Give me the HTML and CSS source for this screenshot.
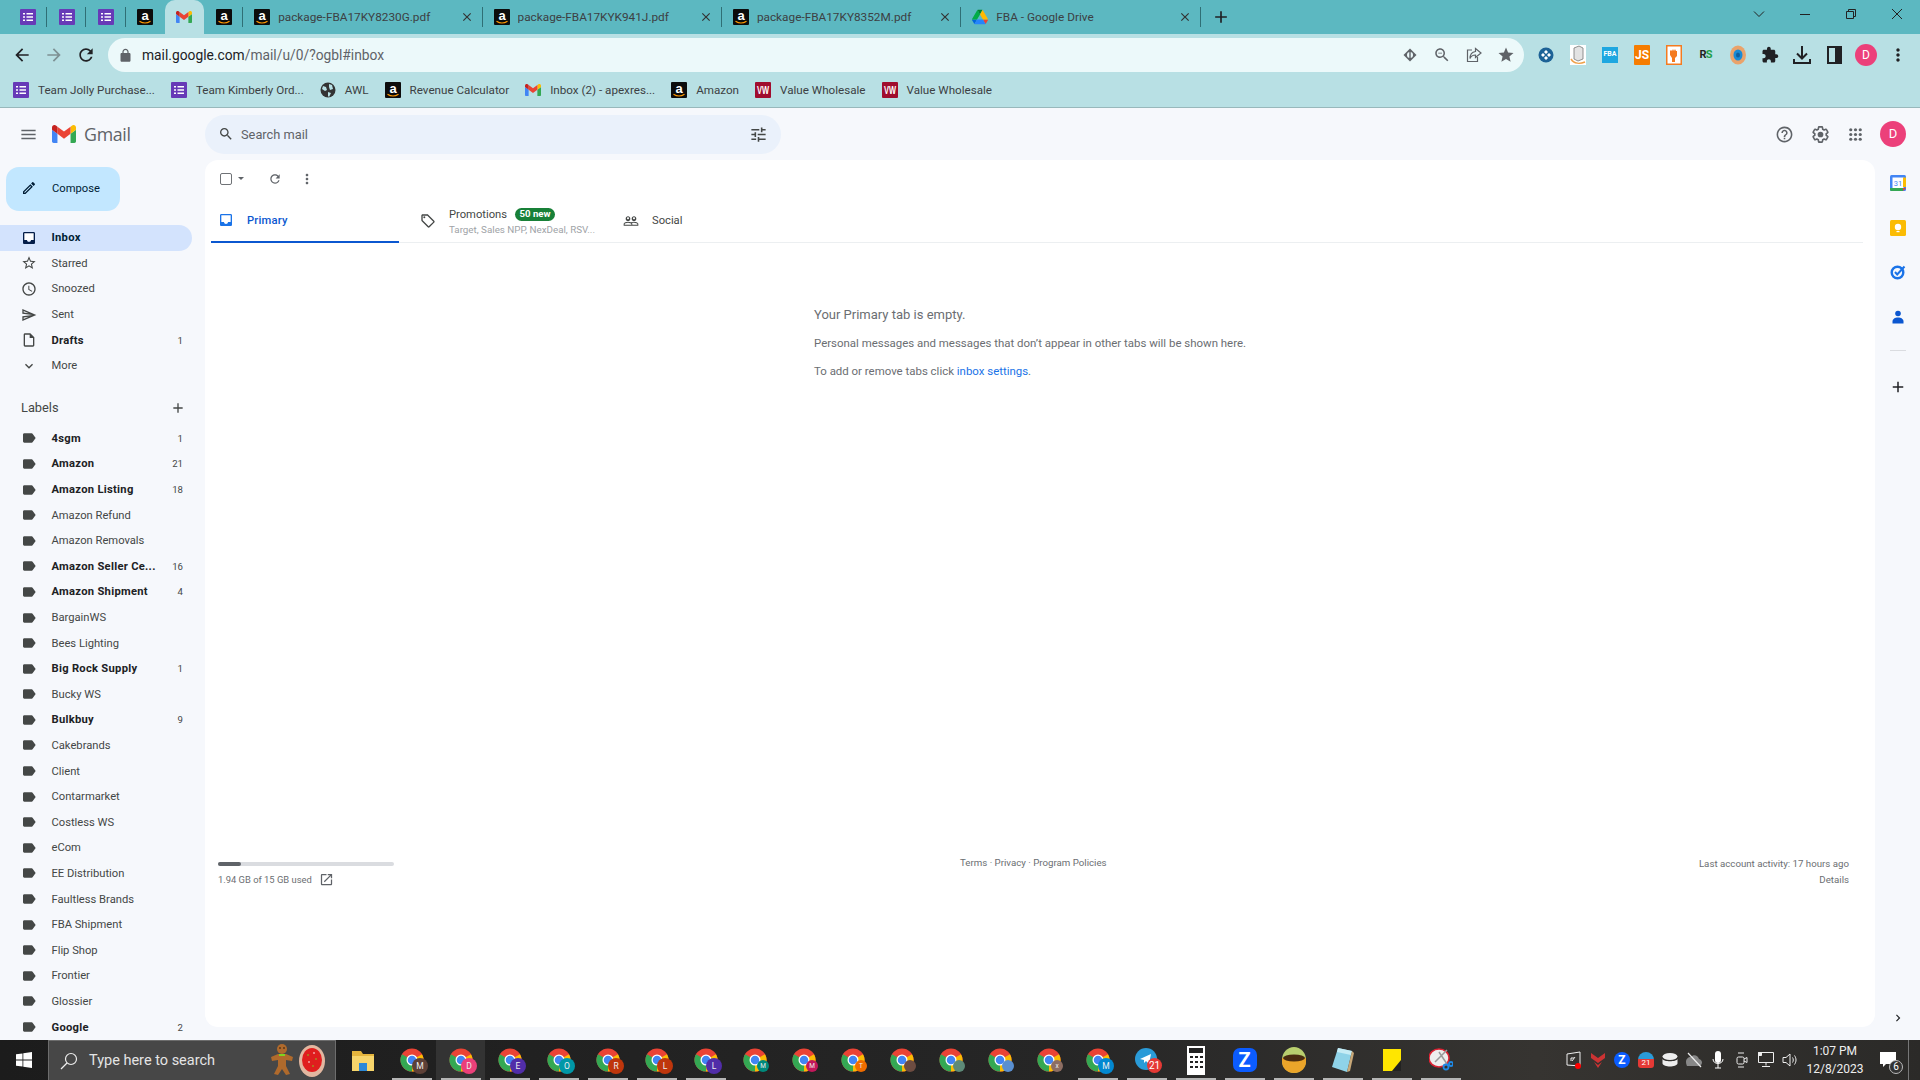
FILE: index.html
```html
<!DOCTYPE html>
<html lang="en">
<head>
    <meta charset="UTF-8">
    <title>Inbox - Gmail</title>
    <link rel="stylesheet" href="styles.css">
</head>
<body>

<svg class="defs" aria-hidden="true">
    <symbol id="forms" viewBox="0 0 16 16"><rect width="16" height="16" rx="1" fill="#673ab7"/><path d="M3 4h2v1.6H3zM6.5 4H13v1.6H6.5zM3 7.2h2v1.6H3zM6.5 7.2H13v1.6H6.5zM3 10.4h2V12H3zM6.5 10.4H13V12H6.5z" fill="#fff"/></symbol>
    <symbol id="amazon" viewBox="0 0 16 16"><rect width="16" height="16" rx="1" fill="#0c0c0c"/><text x="8" y="10.8" text-anchor="middle" font-family="Liberation Sans, sans-serif" font-weight="700" font-size="13" fill="#fff">a</text><path d="M2.5 12.2c3.5 2.3 7.5 2.3 11 0" fill="none" stroke="#f90" stroke-width="1.2"/></symbol>
    <symbol id="gmail" viewBox="52 42 88 66"><path fill="#4285f4" d="M58 108h14V74L52 59v43c0 3.32 2.69 6 6 6"/><path fill="#34a853" d="M120 108h14c3.32 0 6-2.69 6-6V59l-20 15"/><path fill="#fbbc04" d="M120 48v26l20-15v-8c0-7.42-8.47-11.65-14.4-7.2"/><path fill="#ea4335" d="M72 74V48l24 18 24-18v26L96 92"/><path fill="#c5221f" d="M52 51v8l20 15V48l-5.6-4.2c-5.94-4.45-14.4-.22-14.4 7.2"/></symbol>
    <symbol id="drive" viewBox="0 0 87.3 78"><path d="m6.6 66.85 3.85 6.65c.8 1.4 1.95 2.5 3.3 3.3l13.75-23.8h-27.5c0 1.55.4 3.1 1.2 4.5z" fill="#0066da"/><path d="m43.65 25-13.75-23.8c-1.35.8-2.5 1.9-3.3 3.3l-25.4 44a9.06 9.06 0 0 0 -1.2 4.5h27.5z" fill="#00ac47"/><path d="m73.55 76.8c1.35-.8 2.5-1.9 3.3-3.3l1.6-2.75 7.65-13.25c.8-1.4 1.2-2.95 1.2-4.5h-27.502l5.852 11.5z" fill="#ea4335"/><path d="m43.65 25 13.75-23.8c-1.35-.8-2.9-1.2-4.5-1.2h-18.5c-1.6 0-3.15.45-4.5 1.2z" fill="#00832d"/><path d="m59.8 53h-32.3l-13.75 23.8c1.35.8 2.9 1.2 4.5 1.2h50.8c1.6 0 3.15-.45 4.5-1.2z" fill="#2684fc"/><path d="m73.4 26.5-12.7-22c-.8-1.4-1.95-2.5-3.3-3.3l-13.75 23.8 16.15 28h27.45c0-1.55-.4-3.1-1.2-4.5z" fill="#ffba00"/></symbol>
    <symbol id="vw" viewBox="0 0 16 16"><rect width="16" height="16" rx="1" fill="#a00d2e"/><text x="8" y="12.4" text-anchor="middle" font-family="Liberation Sans, sans-serif" font-weight="700" font-size="11" textLength="12" lengthAdjust="spacingAndGlyphs" fill="#fff">VW</text></symbol>
    <symbol id="chrome" viewBox="0 0 48 48"><circle cx="24" cy="24" r="23" fill="#ea4335"/><path d="M24 24 44 12.5A23 23 0 0 1 24 47z" fill="#fbbc04"/><path d="M24 24V47A23 23 0 0 1 4 12.5z" fill="#34a853"/><circle cx="24" cy="24" r="11" fill="#fff"/><circle cx="24" cy="24" r="8.5" fill="#4285f4"/></symbol>

    <symbol id="i-menu" viewBox="0 0 24 24"><path d="M3 18h18v-2H3v2zm0-5h18v-2H3v2zm0-7v2h18V6H3z"/></symbol>
    <symbol id="i-search" viewBox="0 0 24 24"><path d="M15.5 14h-.79l-.28-.27C15.41 12.59 16 11.11 16 9.5 16 5.91 13.09 3 9.5 3S3 5.91 3 9.5 5.91 16 9.5 16c1.61 0 3.09-.59 4.23-1.57l.27.28v.79l5 4.99L20.49 19l-4.99-5zm-6 0C7.01 14 5 11.99 5 9.5S7.01 5 9.5 5 14 7.01 14 9.5 11.99 14 9.5 14z"/></symbol>
    <symbol id="i-tune" viewBox="0 0 24 24"><path d="M3 17v2h6v-2H3zM3 5v2h10V5H3zm10 16v-2h8v-2h-8v-2h-2v6h2zM7 9v2H3v2h4v2h2V9H7zm14 4v-2H11v2h10zm-6-4h2V7h4V5h-4V3h-2v6z"/></symbol>
    <symbol id="i-pencil" viewBox="0 0 24 24"><path d="M14.06 9.02l.92.92L5.92 19H5v-.92l9.06-9.06M17.66 3c-.25 0-.51.1-.7.29l-1.83 1.83 3.75 3.75 1.83-1.83c.39-.39.39-1.02 0-1.41l-2.34-2.34c-.2-.2-.45-.29-.71-.29zm-3.6 3.19L3 17.25V21h3.75L17.81 9.94l-3.75-3.75z"/></symbol>
    <symbol id="i-inbox" viewBox="0 0 24 24"><rect x="4" y="4" width="16" height="12" fill="#fff"/><path d="M19 3H4.99C3.88 3 3 3.9 3 5v14c0 1.1.88 2 1.99 2H19c1.1 0 2-.9 2-2V5c0-1.1-.9-2-2-2zm0 12h-4c0 1.66-1.35 3-3 3s-3-1.34-3-3H4.99V5H19v10z"/></symbol>
    <symbol id="i-star" viewBox="0 0 24 24"><path d="M22 9.24l-7.19-.62L12 2 9.19 8.63 2 9.24l5.46 4.73L5.82 21 12 17.27 18.18 21l-1.63-7.03L22 9.24zM12 15.4l-3.76 2.27 1-4.28-3.32-2.88 4.38-.38L12 6.1l1.71 4.04 4.38.38-3.32 2.88 1 4.28L12 15.4z"/></symbol>
    <symbol id="i-clock" viewBox="0 0 24 24"><path d="M11.99 2C6.47 2 2 6.48 2 12s4.47 10 9.99 10C17.52 22 22 17.52 22 12S17.52 2 11.99 2zM12 20c-4.42 0-8-3.58-8-8s3.58-8 8-8 8 3.58 8 8-3.58 8-8 8zm.5-13H11v6l5.25 3.15.75-1.23-4.5-2.67z"/></symbol>
    <symbol id="i-send" viewBox="0 0 24 24"><path d="M4.01 6.03l7.51 3.22-7.52-1 .01-2.22m7.5 8.72L4 17.97v-2.22l7.51-1M2.01 3L2 10l15 2-15 2 .01 7L23 12 2.01 3z"/></symbol>
    <symbol id="i-file" viewBox="0 0 24 24"><path d="M14 2H6c-1.1 0-1.99.9-1.99 2L4 20c0 1.1.89 2 1.99 2H18c1.1 0 2-.9 2-2V8l-6-6zM6 20V4h7v5h5v11H6z"/></symbol>
    <symbol id="i-down" viewBox="0 0 24 24"><path d="M16.59 8.59L12 13.17 7.41 8.59 6 10l6 6 6-6z"/></symbol>
    <symbol id="i-label" viewBox="0 0 24 24"><path d="M17.63 5.84C17.27 5.33 16.67 5 16 5L5 5.01C3.9 5.01 3 5.9 3 7v10c0 1.1.9 1.99 2 1.99L16 19c.67 0 1.27-.33 1.63-.84L22 12l-4.37-6.16z"/></symbol>
    <symbol id="i-plus" viewBox="0 0 24 24"><path d="M19 13h-6v6h-2v-6H5v-2h6V5h2v6h6v2z"/></symbol>
    <symbol id="i-refresh" viewBox="0 0 24 24"><path d="M17.65 6.35C16.2 4.9 14.21 4 12 4c-4.42 0-7.99 3.58-7.99 8s3.57 8 7.99 8c3.73 0 6.84-2.55 7.73-6h-2.08c-.82 2.33-3.04 4-5.65 4-3.31 0-6-2.69-6-6s2.69-6 6-6c1.66 0 3.14.69 4.22 1.78L13 11h7V4l-2.35 2.35z"/></symbol>
    <symbol id="i-dots" viewBox="0 0 24 24"><path d="M12 8c1.1 0 2-.9 2-2s-.9-2-2-2-2 .9-2 2 .9 2 2 2zm0 2c-1.1 0-2 .9-2 2s.9 2 2 2 2-.9 2-2-.9-2-2-2zm0 6c-1.1 0-2 .9-2 2s.9 2 2 2 2-.9 2-2-.9-2-2-2z"/></symbol>
    <symbol id="i-tag" viewBox="0 0 24 24"><path d="M21.41 11.58l-9-9C12.05 2.22 11.55 2 11 2H4c-1.1 0-2 .9-2 2v7c0 .55.22 1.05.59 1.42l9 9c.36.36.86.58 1.41.58s1.05-.22 1.41-.59l7-7c.37-.36.59-.86.59-1.41s-.23-1.06-.59-1.42zM13 20.01L4 11V4h7v-.01l9 9-7 7.02z"/><circle cx="6.5" cy="6.5" r="1.5"/></symbol>
    <symbol id="i-people" viewBox="0 0 24 24"><path d="M16.5 13c-1.2 0-3.07.34-4.5 1-1.43-.67-3.3-1-4.5-1C5.33 13 1 14.08 1 16.25V19h22v-2.75c0-2.17-4.33-3.25-6.5-3.25zm-4 4.5h-10v-1.25c0-.54 2.56-1.75 5-1.75s5 1.21 5 1.75v1.25zm9 0H14v-1.25c0-.46-.2-.86-.52-1.22.88-.3 1.96-.53 3.02-.53 2.44 0 5 1.21 5 1.75v1.25zM7.5 12c1.93 0 3.5-1.57 3.5-3.5S9.43 5 7.5 5 4 6.57 4 8.5 5.57 12 7.5 12zm0-5.5c.83 0 1.5.67 1.5 1.5s-.67 1.5-1.5 1.5S6 8.83 6 8s.67-1.5 1.5-1.5zm9 5.5c1.93 0 3.5-1.57 3.5-3.5S18.43 5 16.5 5 13 6.57 13 8.5s1.57 3.5 3.5 3.5zm0-5.5c.83 0 1.5.67 1.5 1.5s-.67 1.5-1.5 1.5S15 8.83 15 8s.67-1.5 1.5-1.5z"/></symbol>
    <symbol id="i-help" viewBox="0 0 24 24"><path d="M11 18h2v-2h-2v2zm1-16C6.48 2 2 6.48 2 12s4.48 10 10 10 10-4.48 10-10S17.52 2 12 2zm0 18c-4.41 0-8-3.59-8-8s3.59-8 8-8 8 3.59 8 8-3.59 8-8 8zm0-14c-2.21 0-4 1.79-4 4h2c0-1.1.9-2 2-2s2 .9 2 2c0 2-3 1.75-3 5h2c0-2.25 3-2.5 3-5 0-2.21-1.79-4-4-4z"/></symbol>
    <symbol id="i-gear" viewBox="0 0 24 24"><path fill="none" stroke="currentColor" stroke-width="2" d="M19.14 12.94c.04-.3.06-.61.06-.94 0-.32-.02-.64-.07-.94l2.03-1.58c.18-.14.23-.41.12-.61l-1.92-3.32c-.12-.22-.37-.29-.59-.22l-2.39.96c-.5-.38-1.03-.7-1.62-.94l-.36-2.54c-.04-.24-.24-.41-.48-.41h-3.84c-.24 0-.43.17-.47.41l-.36 2.54c-.59.24-1.13.57-1.62.94l-2.39-.96c-.22-.08-.47 0-.59.22L2.74 8.87c-.12.21-.08.47.12.61l2.03 1.58c-.05.3-.09.63-.09.94s.02.64.07.94l-2.03 1.58c-.18.14-.23.41-.12.61l1.92 3.32c.12.22.37.29.59.22l2.39-.96c.5.38 1.03.7 1.62.94l.36 2.54c.05.24.24.41.48.41h3.84c.24 0 .44-.17.47-.41l.36-2.54c.59-.24 1.13-.56 1.62-.94l2.39.96c.22.08.47 0 .59-.22l1.92-3.32c.12-.22.07-.47-.12-.61l-2.01-1.58z"/><circle cx="12" cy="12" r="3.6"/></symbol>
    <symbol id="i-apps" viewBox="0 0 24 24"><circle cx="6" cy="6" r="2"/><circle cx="12" cy="6" r="2"/><circle cx="18" cy="6" r="2"/><circle cx="6" cy="12" r="2"/><circle cx="12" cy="12" r="2"/><circle cx="18" cy="12" r="2"/><circle cx="6" cy="18" r="2"/><circle cx="12" cy="18" r="2"/><circle cx="18" cy="18" r="2"/></symbol>
    <symbol id="i-open" viewBox="0 0 24 24"><path d="M19 19H5V5h7V3H5c-1.11 0-2 .9-2 2v14c0 1.1.89 2 2 2h14c1.1 0 2-.9 2-2v-7h-2v7zM14 3v2h3.59l-9.83 9.83 1.41 1.41L19 6.41V10h2V3h-7z"/></symbol>
    <symbol id="i-right" viewBox="0 0 24 24"><path d="M10 6L8.59 7.41 13.17 12l-4.58 4.59L10 18l6-6z"/></symbol>
    <symbol id="i-close" viewBox="0 0 24 24"><path d="M19 6.41L17.59 5 12 10.59 6.41 5 5 6.41 10.59 12 5 17.59 6.41 19 12 13.41 17.59 19 19 17.59 13.41 12z"/></symbol>
</svg>

<div class="tabstrip">
    <div class="tab small"><svg class="fav"><use href="#forms"/></svg></div>
    <div class="tab small"><svg class="fav"><use href="#forms"/></svg></div>
    <div class="tab small"><svg class="fav"><use href="#forms"/></svg></div>
    <div class="tab small no-sep"><svg class="fav"><use href="#amazon"/></svg></div>
    <div class="tab small active"><svg class="fav"><use href="#gmail"/></svg></div>
    <div class="tab small"><svg class="fav"><use href="#amazon"/></svg></div>
    <div class="tab wide"><svg class="fav"><use href="#amazon"/></svg><span class="tab-title">package-FBA17KY8230G.pdf</span><svg class="tab-x"><use href="#i-close"/></svg></div>
    <div class="tab wide"><svg class="fav"><use href="#amazon"/></svg><span class="tab-title">package-FBA17KYK941J.pdf</span><svg class="tab-x"><use href="#i-close"/></svg></div>
    <div class="tab wide"><svg class="fav"><use href="#amazon"/></svg><span class="tab-title">package-FBA17KY8352M.pdf</span><svg class="tab-x"><use href="#i-close"/></svg></div>
    <div class="tab wide"><svg class="fav"><use href="#drive"/></svg><span class="tab-title">FBA - Google Drive</span><svg class="tab-x"><use href="#i-close"/></svg></div>
    <svg class="new-tab"><use href="#i-plus"/></svg>
    <div class="win-controls">
        <div class="win-btn"><svg width="12" height="12" viewBox="0 0 12 12"><path d="M1 3.5l5 5 5-5" fill="none" stroke="#222"/></svg></div>
        <div class="win-btn"><svg width="12" height="12" viewBox="0 0 12 12"><path d="M1 6.5h10" stroke="#222"/></svg></div>
        <div class="win-btn"><svg width="12" height="12" viewBox="0 0 12 12"><path d="M1.5 3.5h7v7h-7zM3.5 3.5v-2h7v7h-2" fill="none" stroke="#222"/></svg></div>
        <div class="win-btn"><svg width="12" height="12" viewBox="0 0 12 12"><path d="M1 1l10 10M11 1L1 11" stroke="#222"/></svg></div>
    </div>
</div>

<div class="toolbar">
    <svg class="nav-btn" viewBox="0 0 24 24"><path d="M20 11H7.830l5.590-5.590L12 4l-8 8 8 8 1.410-1.410L7.830 13H20v-2z"/></svg>
    <svg class="nav-btn off" viewBox="0 0 24 24"><path d="M12 4l-1.410 1.410L16.170 11H4v2h12.170l-5.580 5.590L12 20l8-8z"/></svg>
    <svg class="nav-btn" viewBox="0 0 24 24"><use href="#i-refresh"/></svg>
    <div class="omnibox">
        <svg class="lock" viewBox="0 0 24 24"><path d="M18 8h-1V6c0-2.76-2.24-5-5-5S7 3.24 7 6v2H6c-1.1 0-2 .9-2 2v10c0 1.1.9 2 2 2h12c1.1 0 2-.9 2-2V10c0-1.1-.9-2-2-2zM9 6c0-1.66 1.34-3 3-3s3 1.34 3 3v2H9V6z"/></svg>
        <span class="url"><span class="url-host">mail.google.com</span>/mail/u/0/?ogbl#inbox</span>
        <div class="omni-actions">
            <div class="tb-btn"><svg width="16" height="16" viewBox="0 0 16 16"><path d="M8 1.500L14.500 8 8 14.500 1.500 8z" fill="#5f6368"/><circle cx="8" cy="8" r="3" fill="#ecf9fa"/><path d="M8 5v6" stroke="#5f6368" stroke-width="1.400"/></svg></div>
            <div class="tb-btn"><svg width="18" height="18" viewBox="0 0 24 24" fill="#5f6368"><path d="M15.5 14h-.79l-.28-.27C15.41 12.59 16 11.11 16 9.5 16 5.91 13.09 3 9.5 3S3 5.91 3 9.5 5.91 16 9.5 16c1.61 0 3.09-.59 4.23-1.57l.27.28v.79l5 4.99L20.49 19l-4.99-5zm-6 0C7.01 14 5 11.99 5 9.5S7.01 5 9.5 5 14 7.01 14 9.5 11.99 14 9.5 14zM7 9h5v1H7z"/></svg></div>
            <div class="tb-btn"><svg width="16" height="16" viewBox="0 0 16 16" fill="none" stroke="#5f6368" stroke-width="1.2"><path d="M6 3H1.500v11.500h10V10"/><path d="M9.500 1.500L15 6l-5.500 4.500V8C7 8 5 9 4 11.500 4 7.500 6 5 9.500 4.500z"/></svg></div>
            <div class="tb-btn"><svg width="18" height="18" viewBox="0 0 24 24" fill="#5f6368"><path d="M12 17.27L18.18 21l-1.64-7.03L22 9.24l-7.19-.61L12 2 9.19 8.63 2 9.24l5.46 4.73L5.82 21z"/></svg></div>
        </div>
    </div>
    <div class="extensions">
        <div class="tb-btn"><svg width="16" height="16" viewBox="0 0 16 16"><circle cx="8" cy="8" r="7.500" fill="#1d6296"/><path d="M8 3l2 2-2 2-2-2zM8 9l2 2-2 2-2-2zM3 8l2-2 2 2-2 2zM9 8l2-2 2 2-2 2z" fill="#fff"/></svg></div>
        <div class="tb-btn"><svg width="16" height="20" viewBox="0 0 16 20"><rect width="16" height="20" fill="#fff"/><path d="M4 3l5-2 4 2v11l-5 2-4-2z" fill="#e3e3e3" stroke="#777" stroke-width=".8"/><path d="M1 14c3 5 9 5 14 3" fill="none" stroke="#f0a24a" stroke-width="1.500"/></svg></div>
        <div class="tb-btn"><div class="ext-fba">FBA</div></div>
        <div class="tb-btn"><div class="ext-js">JS</div></div>
        <div class="tb-btn"><svg width="16" height="20" viewBox="0 0 16 20"><rect x=".75" y=".75" width="14.500" height="18.500" fill="#fff" stroke="#f47b20" stroke-width="1.500"/><path d="M4 6l1-1 1 1 1-2 1 2 1-2 1 2 1 0v5l-2 2v4H6v-4L4 10z" fill="#f47b20"/></svg></div>
        <div class="tb-btn"><div class="ext-rs"><span class="rs-r">R</span><span class="rs-s">S</span></div></div>
        <div class="tb-btn"><svg width="16" height="20" viewBox="0 0 16 20"><ellipse cx="8" cy="10" rx="8" ry="9.500" fill="#eaa36b"/><ellipse cx="8" cy="10" rx="4.500" ry="5.500" fill="#1a8bd6"/><ellipse cx="8" cy="10" rx="2" ry="2.500" fill="#0d5fa0"/></svg></div>
        <div class="tb-btn"><svg width="18" height="18" viewBox="0 0 24 24" fill="#202124"><path d="M20.500 11H19V7c0-1.100-.9-2-2-2h-4V3.500C13 2.120 11.880 1 10.500 1S8 2.120 8 3.500V5H4c-1.100 0-1.990.9-1.990 2v3.800H3.500c1.490 0 2.700 1.210 2.700 2.700s-1.210 2.700-2.700 2.700H2V20c0 1.100.9 2 2 2h3.800v-1.500c0-1.490 1.210-2.700 2.700-2.700 1.490 0 2.700 1.210 2.700 2.700V22H17c1.100 0 2-.9 2-2v-4h1.500c1.380 0 2.500-1.120 2.500-2.500S21.880 11 20.500 11z"/></svg></div>
        <div class="tb-btn"><svg width="18" height="20" viewBox="0 0 18 20" fill="none" stroke="#202124" stroke-width="2"><path d="M9 1v12M4 8.500l5 5 5-5M1 14v4h16v-4"/></svg></div>
        <div class="tb-btn"><svg width="15" height="18" viewBox="0 0 15 18"><path d="M0 0h15v18H0zM2 2v14h6V2z" fill="#202124" fill-rule="evenodd"/></svg></div>
        <div class="tb-btn"><div class="chrome-avatar">D</div></div>
        <div class="tb-btn"><svg width="20" height="20" viewBox="0 0 24 24" fill="#202124"><use href="#i-dots"/></svg></div>
    </div>
</div>

<div class="bookmarks">
    <div class="bm"><svg class="fav"><use href="#forms"/></svg>Team Jolly Purchase...</div>
    <div class="bm"><svg class="fav"><use href="#forms"/></svg>Team Kimberly Ord...</div>
    <div class="bm"><svg class="fav" viewBox="0 0 16 16"><circle cx="8" cy="8" r="7.500" fill="#333"/><path d="M3 4l3 1 1 3-2 1-3-2zM9 2l3 1 1 4-3 1-1-3zM8 10l3 1-2 4-1-1z" fill="#b8e0e4"/></svg>AWL</div>
    <div class="bm"><svg class="fav"><use href="#amazon"/></svg>Revenue Calculator</div>
    <div class="bm"><svg class="fav"><use href="#gmail"/></svg>Inbox (2) - apexres...</div>
    <div class="bm"><svg class="fav"><use href="#amazon"/></svg>Amazon</div>
    <div class="bm"><svg class="fav"><use href="#vw"/></svg>Value Wholesale</div>
    <div class="bm"><svg class="fav"><use href="#vw"/></svg>Value Wholesale</div>
</div>

<div class="gmail">
    <div class="gm-brand">
        <svg class="ic hamburger"><use href="#i-menu"/></svg>
        <svg class="gm-logo"><use href="#gmail"/></svg>
        <span class="gm-word">Gmail</span>
    </div>
    <div class="gm-top">
        <div class="searchbar">
            <svg class="ic"><use href="#i-search"/></svg>
            <span class="search-text">Search mail</span>
            <svg class="ic tune"><use href="#i-tune"/></svg>
        </div>
        <div class="top-actions">
            <svg class="top-ic"><use href="#i-help"/></svg>
            <svg class="top-ic"><use href="#i-gear"/></svg>
            <svg class="top-ic"><use href="#i-apps"/></svg>
            <div class="gm-avatar">D</div>
        </div>
    </div>

    <div class="sidebar">
        <div class="compose"><svg class="ic"><use href="#i-pencil"/></svg>Compose</div>
        <div class="row bold selected"><svg class="ic"><use href="#i-inbox"/></svg><span class="name">Inbox</span></div>
        <div class="row"><svg class="ic"><use href="#i-star"/></svg><span class="name">Starred</span></div>
        <div class="row"><svg class="ic"><use href="#i-clock"/></svg><span class="name">Snoozed</span></div>
        <div class="row"><svg class="ic"><use href="#i-send"/></svg><span class="name">Sent</span></div>
        <div class="row bold"><svg class="ic"><use href="#i-file"/></svg><span class="name">Drafts</span><span class="count">1</span></div>
        <div class="row"><svg class="ic"><use href="#i-down"/></svg><span class="name">More</span></div>
        <div class="labels-head">Labels<svg class="ic"><use href="#i-plus"/></svg></div>
        <div class="row bold"><svg class="ic"><use href="#i-label"/></svg><span class="name">4sgm</span><span class="count">1</span></div>
        <div class="row bold"><svg class="ic"><use href="#i-label"/></svg><span class="name">Amazon</span><span class="count">21</span></div>
        <div class="row bold"><svg class="ic"><use href="#i-label"/></svg><span class="name">Amazon Listing</span><span class="count">18</span></div>
        <div class="row"><svg class="ic"><use href="#i-label"/></svg><span class="name">Amazon Refund</span></div>
        <div class="row"><svg class="ic"><use href="#i-label"/></svg><span class="name">Amazon Removals</span></div>
        <div class="row bold"><svg class="ic"><use href="#i-label"/></svg><span class="name">Amazon Seller Ce...</span><span class="count">16</span></div>
        <div class="row bold"><svg class="ic"><use href="#i-label"/></svg><span class="name">Amazon Shipment</span><span class="count">4</span></div>
        <div class="row"><svg class="ic"><use href="#i-label"/></svg><span class="name">BargainWS</span></div>
        <div class="row"><svg class="ic"><use href="#i-label"/></svg><span class="name">Bees Lighting</span></div>
        <div class="row bold"><svg class="ic"><use href="#i-label"/></svg><span class="name">Big Rock Supply</span><span class="count">1</span></div>
        <div class="row"><svg class="ic"><use href="#i-label"/></svg><span class="name">Bucky WS</span></div>
        <div class="row bold"><svg class="ic"><use href="#i-label"/></svg><span class="name">Bulkbuy</span><span class="count">9</span></div>
        <div class="row"><svg class="ic"><use href="#i-label"/></svg><span class="name">Cakebrands</span></div>
        <div class="row"><svg class="ic"><use href="#i-label"/></svg><span class="name">Client</span></div>
        <div class="row"><svg class="ic"><use href="#i-label"/></svg><span class="name">Contarmarket</span></div>
        <div class="row"><svg class="ic"><use href="#i-label"/></svg><span class="name">Costless WS</span></div>
        <div class="row"><svg class="ic"><use href="#i-label"/></svg><span class="name">eCom</span></div>
        <div class="row"><svg class="ic"><use href="#i-label"/></svg><span class="name">EE Distribution</span></div>
        <div class="row"><svg class="ic"><use href="#i-label"/></svg><span class="name">Faultless Brands</span></div>
        <div class="row"><svg class="ic"><use href="#i-label"/></svg><span class="name">FBA Shipment</span></div>
        <div class="row"><svg class="ic"><use href="#i-label"/></svg><span class="name">Flip Shop</span></div>
        <div class="row"><svg class="ic"><use href="#i-label"/></svg><span class="name">Frontier</span></div>
        <div class="row"><svg class="ic"><use href="#i-label"/></svg><span class="name">Glossier</span></div>
        <div class="row bold"><svg class="ic"><use href="#i-label"/></svg><span class="name">Google</span><span class="count">2</span></div>
    </div>

    <div class="panel">
        <div class="panel-tools">
            <span class="checkbox"></span>
            <span class="caret"></span>
            <svg class="ic refresh"><use href="#i-refresh"/></svg>
            <svg class="ic more"><use href="#i-dots"/></svg>
        </div>
        <div class="cat-tabs">
            <div class="cat primary"><svg class="ic"><use href="#i-inbox"/></svg><span>Primary</span></div>
            <div class="cat promo">
                <svg class="ic"><use href="#i-tag"/></svg>
                <div class="promo-text">
                    <div class="promo-top">Promotions <span class="new-badge">50 new</span></div>
                    <div class="promo-sub">Target, Sales NPP, NexDeal, RSV...</div>
                </div>
            </div>
            <div class="cat social"><svg class="ic"><use href="#i-people"/></svg><span>Social</span></div>
        </div>
        <div class="empty">
            <div class="empty-title">Your Primary tab is empty.</div>
            <p>Personal messages and messages that don’t appear in other tabs will be shown here.</p>
            <p>To add or remove tabs click <a class="link">inbox settings</a>.</p>
        </div>
        <div class="footer">
            <div class="storage">
                <div class="bar"><div class="bar-fill" style="width: 13%"></div></div>
                <div class="storage-text">1.94 GB of 15 GB used <svg class="ic open"><use href="#i-open"/></svg></div>
            </div>
            <div class="terms">Terms · Privacy · Program Policies</div>
            <div class="activity">
                <div>Last account activity: 17 hours ago</div>
                <div class="details">Details</div>
            </div>
        </div>
    </div>

    <div class="sidepanel">
        <svg class="side-ic" viewBox="0 0 16 16"><rect width="16" height="16" rx="1.500" fill="#4285f4"/><rect x="2.500" y="2.500" width="11" height="11" fill="#fff"/><path d="M0 13h13v3H1.500A1.500 1.500 0 0 1 0 14.500z" fill="#34a853"/><path d="M13 2.500h3V12h-3z" fill="#fbbc04"/><path d="M13 13h3l-3 3z" fill="#ea4335"/><text x="8" y="11" text-anchor="middle" font-size="7.500" font-family="Roboto, sans-serif" fill="#4285f4">31</text></svg>
        <svg class="side-ic" viewBox="0 0 16 16"><rect width="16" height="16" rx="1.500" fill="#fbbc04"/><circle cx="8" cy="7" r="3.200" fill="#fff"/><rect x="6.500" y="11" width="3" height="1.200" fill="#fff"/></svg>
        <svg class="side-ic" viewBox="0 0 16 16"><circle cx="7.500" cy="8.500" r="5.800" fill="none" stroke="#1a73e8" stroke-width="2.400"/><path d="M5 8l2.200 2.400L14.500 2.500" fill="none" stroke="#1a73e8" stroke-width="2"/></svg>
        <svg class="side-ic" viewBox="0 0 16 16"><circle cx="8" cy="4.500" r="2.800" fill="#0b57d0"/><path d="M2.500 14.500v-2c0-2.500 2.500-4 5.500-4s5.500 1.500 5.500 4v2z" fill="#0b57d0"/></svg>
        <div class="side-sep"></div>
        <svg class="side-plus"><use href="#i-plus"/></svg>
        <svg class="side-right"><use href="#i-right"/></svg>
    </div>
</div>

<div class="taskbar">
    <div class="start"><svg width="16" height="16" viewBox="0 0 16 16" fill="#fff"><path d="M0 2.300l6.500-.9v6.200H0zM7.300 1.300L16 0v7.600H7.300zM0 8.400h6.500v6.200L0 13.700zM7.300 8.400H16V16l-8.700-1.200z"/></svg></div>
    <div class="task-search">
        <svg width="18" height="18" viewBox="0 0 18 18" fill="none" stroke="#eee" stroke-width="1.200"><circle cx="11" cy="7" r="5.500"/><path d="M7 11l-6 6"/></svg>
        <span class="task-search-text">Type here to search</span>
        <svg class="ginger" width="26" height="34" viewBox="0 0 26 34"><circle cx="13" cy="6" r="5" fill="#b06a2c"/><path d="M9 11h8l7 3-1 4-6-1v6l4 8-4 1-4-6-4 6-4-1 4-8v-6l-6 1-1-4z" fill="#b06a2c"/><path d="M10 12h6" stroke="#7ed321" stroke-width="2"/><circle cx="11" cy="5" r=".7"/><circle cx="15" cy="5" r=".7"/></svg>
        <svg class="ornament" width="26" height="32" viewBox="0 0 26 32"><ellipse cx="13" cy="16" rx="13" ry="16" fill="#e2b7a0"/><ellipse cx="13" cy="15" rx="10" ry="12" fill="#e01e1e"/><circle cx="9" cy="10" r=".8" fill="#7ed321"/><circle cx="15" cy="8" r=".8" fill="#fff"/><circle cx="17" cy="14" r=".8" fill="#7ed321"/><circle cx="10" cy="17" r=".8" fill="#fff"/><circle cx="14" cy="21" r=".8" fill="#7ed321"/></svg>
    </div>
    <div class="apps">
        <div class="app"><svg width="24" height="22" viewBox="0 0 24 22"><path d="M1 2h9l2 3h11v4H1z" fill="#e5b53d"/><path d="M1 7h22v15H1z" fill="#f7d56b"/><path d="M8 14h8v8H8z" fill="#2b88d8"/></svg></div>
        <div class="app on"><svg class="chrome"><use href="#chrome"/></svg><span class="ch-badge" style="background: #5d4037">M</span></div>
        <div class="app on hl"><svg class="chrome"><use href="#chrome"/></svg><span class="ch-badge" style="background: #ec407a">D</span></div>
        <div class="app on"><svg class="chrome"><use href="#chrome"/></svg><span class="ch-badge" style="background: #512da8">E</span></div>
        <div class="app on"><svg class="chrome"><use href="#chrome"/></svg><span class="ch-badge" style="background: #0097a7">O</span></div>
        <div class="app on"><svg class="chrome"><use href="#chrome"/></svg><span class="ch-badge" style="background: #bf360c">R</span></div>
        <div class="app on"><svg class="chrome"><use href="#chrome"/></svg><span class="ch-badge" style="background: #bf360c">L</span></div>
        <div class="app on"><svg class="chrome"><use href="#chrome"/></svg><span class="ch-badge" style="background: #512da8">L</span></div>
        <div class="app"><svg class="chrome"><use href="#chrome"/></svg><span class="ch-badge tiny" style="background: #00897b">M</span></div>
        <div class="app"><svg class="chrome"><use href="#chrome"/></svg><span class="ch-badge tiny" style="background: #c2185b">M</span></div>
        <div class="app"><svg class="chrome"><use href="#chrome"/></svg><span class="ch-badge tiny" style="background: #ef6c00">T</span></div>
        <div class="app"><svg class="chrome"><use href="#chrome"/></svg><span class="ch-badge tiny" style="background: #6d4c41"></span></div>
        <div class="app"><svg class="chrome"><use href="#chrome"/></svg><span class="ch-badge tiny" style="background: #5d8a78"></span></div>
        <div class="app"><svg class="chrome"><use href="#chrome"/></svg><span class="ch-badge tiny" style="background: #5a8fd0"></span></div>
        <div class="app"><svg class="chrome"><use href="#chrome"/></svg><span class="ch-badge tiny" style="background: #8d6e63">x</span></div>
        <div class="app on"><svg class="chrome"><use href="#chrome"/></svg><span class="ch-badge" style="background: #0288d1">M</span></div>
        <div class="app on"><svg width="24" height="24" viewBox="0 0 24 24"><circle cx="11" cy="11" r="11" fill="#2a9bd8"/><path d="M5 11l11-5-2 10-3-3-2 2v-3z" fill="#fff"/></svg><span class="tg-badge">21</span></div>
        <div class="app on"><svg width="18" height="29" viewBox="0 0 18 29"><rect width="18" height="29" fill="#fff"/><rect x="2" y="2" width="14" height="5" fill="#222"/><path d="M3 10h3v2H3zM8 10h3v2H8zM13 10h3v2h-3zM3 15h3v2H3zM8 15h3v2H8zM13 15h3v2h-3zM3 20h3v2H3zM8 20h3v2H8zM13 20h3v2h-3z" fill="#222"/></svg></div>
        <div class="app on"><div class="zoom-ic">Z</div></div>
        <div class="app on"><svg width="24" height="26" viewBox="0 0 24 26"><ellipse cx="12" cy="13" rx="12" ry="13" fill="#b9cf6e"/><path d="M0 11h24v4c0 6-5 11-12 11S0 21 0 15z" fill="#eba52a"/><ellipse cx="12" cy="11" rx="11" ry="3.500" fill="#4a2c10"/></svg></div>
        <div class="app on"><svg width="24" height="26" viewBox="0 0 24 26"><path d="M7 1l14 3-5 21-15-5z" fill="#8fd3e8"/><path d="M7 1l14 3-1 4-14-3z" fill="#c6ecf5"/><path d="M16 25l5-21 2 2-4 18z" fill="#c8a878"/></svg></div>
        <div class="app on"><svg width="18" height="22" viewBox="0 0 18 22"><path d="M0 0h18v22H0z" fill="#ffe600"/><path d="M18 11v11H9z" fill="#222"/></svg></div>
        <div class="app on"><svg width="24" height="26" viewBox="0 0 24 26"><ellipse cx="10" cy="11" rx="10" ry="9" fill="#eee" stroke="#d23" stroke-width="1.500"/><path d="M6 15L18 3M10 5l8 12" stroke="#999" stroke-width="1.500"/><circle cx="17" cy="20" r="2.500" fill="none" stroke="#1e88e5" stroke-width="1.800"/><circle cx="22" cy="17" r="2" fill="none" stroke="#1e88e5" stroke-width="1.800"/></svg></div>
    </div>
    <div class="tray">
        <div class="tray-ic"><svg width="16" height="18" viewBox="0 0 16 18" fill="none" stroke="#eee"><path d="M1 3l13-2v14l-13-1z"/><path d="M5 10V7h3M9 6l-3 4" /><circle cx="12" cy="15" r="3" fill="#f00" stroke="none"/></svg></div>
        <div class="tray-ic"><svg width="14" height="18" viewBox="0 0 14 18" fill="#c33"><path d="M0 2l7 5 7-5v5l-7 5-7-5zM3 11l4 3 4-3-4 6z"/></svg></div>
        <div class="tray-ic"><div class="zoom-ic mini">Z</div></div>
        <div class="tray-ic"><div class="tg-mini">21</div></div>
        <div class="tray-ic"><svg width="16" height="14" viewBox="0 0 16 14"><ellipse cx="8" cy="3.500" rx="7.500" ry="3.500" fill="#eee"/><path d="M.5 6c1 3 14 3 15 0v4.500c-1 4-14 4-15 0z" fill="#eee"/></svg></div>
        <div class="tray-ic"><svg width="18" height="16" viewBox="0 0 18 16"><path d="M2 14h12c4-1 4-6 0-7-1-4-6-5-8-2-3 0-5 2-5 5 0 2 1 4 1 4z" fill="#888"/><path d="M3 1l13 14" stroke="#eee" stroke-width="1.200"/></svg></div>
        <div class="tray-ic"><svg width="12" height="18" viewBox="0 0 12 18"><rect x="3" width="6" height="12" rx="3" fill="#fff"/><path d="M1 8c0 6 10 6 10 0M6 13v4M3 17h6" fill="none" stroke="#fff"/></svg></div>
        <div class="tray-ic"><svg width="12" height="18" viewBox="0 0 12 18" fill="none" stroke="#eee"><rect x="1" y="6" width="7" height="7" rx="1.500"/><path d="M8 8l3-1.500v5L8 10M2 2h6M2 16h6" /></svg></div>
        <div class="tray-ic"><svg width="16" height="16" viewBox="0 0 16 16" fill="none" stroke="#eee"><path d="M.5 .5h15v10H.5zM8 10.500v3M4 14.500h8"/><path d="M.5 .5h3v3h-3z" fill="#eee"/></svg></div>
        <div class="tray-ic"><svg width="16" height="16" viewBox="0 0 16 16" fill="none" stroke="#eee"><path d="M1 5.500h3L8 2v12l-4-3.500H1zM10.500 5.500c1 1.500 1 3.500 0 5M12.500 3.500c2 3 2 6 0 9"/></svg></div>
        <div class="clock"><div>1:07 PM</div><div>12/8/2023</div></div>
        <div class="notif"><svg width="16" height="16" viewBox="0 0 16 16"><path d="M0 0h16v12H6l-3 3v-3H0z" fill="#fff"/></svg><span class="notif-badge">6</span></div>
        <div class="show-desktop"></div>
    </div>
</div>

</body>
</html>
```

FILE: styles.css
```css
* {
    box-sizing: border-box;
}
html, body {
    margin: 0;
    height: 100%;
}
body {
    width: 1920px;
    height: 1080px;
    display: flex;
    flex-direction: column;
    overflow: hidden;
    font-family: Roboto, "Liberation Sans", sans-serif;
    color: #444746;
    background: #f6f8fc;
}
.defs {
    display: none;
}

/* browser tabs */
.tabstrip {
    height: 34px;
    flex: none;
    display: flex;
    padding-left: 8px;
    background: #5cb8c1;
}
.tab {
    position: relative;
    display: flex;
    align-items: center;
    flex: none;
}
.tab::after {
    content: "";
    position: absolute;
    right: 0;
    top: 7px;
    height: 20px;
    border-right: 1px solid #2f6f75;
}
.no-sep::after, .active::after {
    display: none;
}
.small {
    width: 39.2px;
    justify-content: center;
}
.wide {
    width: 239.4px;
    padding-left: 11px;
    padding-right: 8px;
}
.active {
    background: #b8e0e4;
    border-radius: 10px 10px 0 0;
}
.fav {
    width: 16px;
    height: 16px;
    flex: none;
}
.tab-title {
    flex: 1;
    margin-left: 8px;
    font-size: 11.8px;
    color: #3c4043;
    white-space: nowrap;
    overflow: hidden;
}
.tab-x {
    width: 14px;
    height: 14px;
    margin-right: 1px;
    fill: #333;
}
.new-tab {
    width: 20px;
    height: 20px;
    margin: 7px 0 0 10.5px;
    fill: #202124;
}
.win-controls {
    margin-left: auto;
    display: flex;
}
.win-btn {
    width: 46px;
    height: 28px;
    display: flex;
    align-items: center;
    justify-content: center;
}

/* browser toolbar */
.toolbar {
    height: 39px;
    flex: none;
    display: flex;
    align-items: center;
    padding: 4px 0 1px 6px;
    background: #b8e0e4;
}
.nav-btn {
    width: 32px;
    height: 20px;
    fill: #202124;
}
.nav-btn.off {
    fill: #7d9093;
}
.omnibox {
    width: 1416px;
    height: 34px;
    margin-left: 6px;
    display: flex;
    align-items: center;
    padding-left: 10px;
    border-radius: 17px;
    background: #ecf9fa;
}
.lock {
    width: 15px;
    height: 15px;
    fill: #5f6368;
    flex: none;
}
.url {
    margin-left: 9px;
    font-size: 13.8px;
    color: #5f6368;
}
.url-host {
    color: #202124;
}
.omni-actions {
    margin-left: auto;
    margin-right: 2px;
    display: flex;
}
.tb-btn {
    width: 32px;
    height: 32px;
    display: flex;
    align-items: center;
    justify-content: center;
}
.extensions {
    margin-left: 6px;
    display: flex;
}
.ext-fba {
    width: 16px;
    height: 16px;
    background: #1ea7e0;
    color: #fff;
    font-size: 7px;
    font-weight: 700;
    line-height: 14px;
    text-align: center;
}
.ext-js {
    width: 16px;
    height: 20px;
    border-radius: 1px;
    background: #f57c00;
    color: #fff;
    font-size: 12px;
    font-weight: 700;
    line-height: 20px;
    text-align: center;
}
.ext-rs {
    font-size: 11px;
    font-weight: 700;
    line-height: 10px;
}
.rs-r {
    color: #222;
}
.rs-s {
    color: #1e9e4a;
    margin-left: -1px;
}
.chrome-avatar {
    width: 22px;
    height: 22px;
    border-radius: 50%;
    background: #ec407a;
    color: #fff;
    font-size: 12px;
    line-height: 22px;
    text-align: center;
}

/* bookmarks bar */
.bookmarks {
    height: 35px;
    flex: none;
    display: flex;
    align-items: center;
    gap: 16px;
    padding: 0 0 1px 13px;
    background: #b8e0e4;
    border-bottom: 1px solid #98b8bb;
}
.bm {
    display: flex;
    align-items: center;
    gap: 9px;
    font-size: 11.65px;
    color: #3c4043;
    white-space: nowrap;
}

/* gmail */
.gmail {
    height: 932px;
    flex: none;
    display: grid;
    grid-template-columns: 205px 1fr 45px;
    grid-template-rows: 52px 1fr;
    background: #f6f8fc;
}
.ic {
    width: 16px;
    height: 16px;
    flex: none;
    fill: #444746;
}
.gm-brand {
    display: flex;
    align-items: center;
    padding-left: 19px;
}
.hamburger {
    width: 19px;
    height: 19px;
    fill: #5f6368;
}
.gm-logo {
    width: 24px;
    height: 18px;
    margin-left: 14px;
}
.gm-word {
    margin-left: 8px;
    font-family: "Open Sans", sans-serif;
    font-size: 17.8px;
    letter-spacing: -0.3px;
    color: #5f6368;
}
.gm-top {
    grid-column: 2 / 4;
    display: flex;
    align-items: center;
    justify-content: space-between;
}
.searchbar {
    width: 576px;
    height: 39px;
    display: flex;
    align-items: center;
    padding: 0 13px;
    border-radius: 20px;
    background: #eaf1fb;
}
.search-text {
    flex: 1;
    margin-left: 7px;
    font-size: 12.8px;
    color: #5f6368;
}
.tune {
    width: 19px;
    height: 19px;
}
.top-actions {
    display: flex;
    align-items: center;
    padding-right: 14px;
}
.top-ic {
    width: 19px;
    height: 19px;
    margin-right: 16.5px;
    fill: #5f6368;
    color: #5f6368;
}
.top-ic:nth-child(3) {
    margin-right: 15px;
}
.gm-avatar {
    width: 26px;
    height: 26px;
    border-radius: 50%;
    background: #ec407a;
    color: #fff;
    font-size: 13px;
    line-height: 26px;
    text-align: center;
}

/* left nav */
.sidebar {
    overflow: hidden;
    padding-right: 13px;
}
.compose {
    width: 114px;
    height: 44px;
    margin: 7px 0 14px 6px;
    display: flex;
    align-items: center;
    gap: 15px;
    padding: 0 0 2px 15px;
    border-radius: 13px;
    background: #c2e7ff;
    font-size: 11.2px;
    color: #001d35;
}
.compose .ic {
    fill: #001d35;
}
.row {
    height: 25.6px;
    display: flex;
    align-items: center;
    padding: 0 9px 0 21px;
    font-size: 11.2px;
    color: #444746;
}
.row .name {
    margin-left: 14.5px;
    flex: 1;
}
.bold {
    font-weight: 700;
    color: #202124;
}
.bold .name {
    letter-spacing: 0.28px;
}
.count {
    font-size: 9.6px;
    font-weight: 400;
    color: #444746;
}
.selected {
    background: #d3e3fd;
    border-radius: 0 13px 13px 0;
    color: #001d35;
}
.selected .ic {
    fill: #041e49;
}
.labels-head {
    height: 26px;
    margin: 16px 0 5px;
    display: flex;
    align-items: center;
    justify-content: space-between;
    padding: 0 6px 0 21px;
    font-size: 12.8px;
    color: #444746;
}

/* message panel */
.panel {
    height: 867px;
    display: flex;
    flex-direction: column;
    border-radius: 13px;
    background: #fff;
}
.panel-tools {
    height: 39px;
    flex: none;
    display: flex;
    align-items: center;
    padding: 0 0 2px 15px;
}
.checkbox {
    width: 12px;
    height: 12px;
    border: 1.6px solid #6f7276;
    border-radius: 2px;
}
.caret {
    width: 0;
    height: 0;
    margin-left: 6px;
    border: 3px solid transparent;
    border-top: 3.5px solid #5f6368;
    border-bottom: 0;
}
.refresh {
    width: 14px;
    height: 14px;
    margin-left: 23.5px;
    fill: #5f6368;
}
.more {
    margin-left: 17px;
    fill: #5f6368;
}
.cat-tabs {
    height: 44px;
    flex: none;
    margin: 0 12px 0 6px;
    display: flex;
    border-bottom: 1px solid #eceff1;
}
.cat {
    display: flex;
    align-items: center;
    font-size: 11.2px;
    color: #444746;
}
.primary {
    width: 188px;
    height: 44px;
    padding-left: 7px;
    gap: 13px;
    font-weight: 500;
    letter-spacing: 0.2px;
    color: #0b57d0;
    border-bottom: 2px solid #0b57d0;
}
.primary .ic {
    fill: #1a73e8;
}
.promo {
    width: 203px;
    padding-left: 21px;
    gap: 13px;
}
.promo-text {
    padding-top: 1px;
}
.promo-top {
    display: flex;
    align-items: center;
    gap: 8px;
    height: 14px;
}
.new-badge {
    height: 12.5px;
    padding: 0 4.5px;
    border-radius: 7px;
    background: #188038;
    color: #fff;
    font-size: 9.6px;
    font-weight: 700;
    line-height: 12.5px;
}
.promo-sub {
    margin-top: 2px;
    font-size: 9.8px;
    color: #a0a3a7;
    white-space: nowrap;
}
.social {
    padding-left: 21px;
    gap: 13px;
}
.empty {
    height: 613px;
    flex: none;
    padding: 64px 0 0 609px;
    color: #6b6e72;
}
.empty-title {
    font-size: 13px;
    line-height: 16px;
    margin-bottom: -1px;
}
.empty p {
    margin: 14px 0 0;
    font-size: 11.45px;
    line-height: 14px;
}
.link {
    color: #1a73e8;
}
.footer {
    display: flex;
    padding: 0 26px 0 13px;
    font-size: 9.7px;
    color: #6b6e72;
}
.storage {
    width: 176px;
    padding-top: 6px;
}
.bar {
    height: 4px;
    border-radius: 2px;
    background: #dadce0;
}
.bar-fill {
    height: 4px;
    border-radius: 2px;
    background: #5f6368;
}
.storage-text {
    margin-top: 6px;
    display: flex;
    align-items: center;
    gap: 7px;
    font-size: 9.4px;
    white-space: nowrap;
}
.open {
    width: 15px;
    height: 15px;
    fill: #5f6368;
}
.terms {
    margin-left: 566px;
    line-height: 14px;
}
.activity {
    margin-left: auto;
    text-align: right;
    line-height: 16px;
}

/* right rail */
.sidepanel {
    display: flex;
    flex-direction: column;
    align-items: center;
    padding-top: 15px;
}
.side-ic {
    width: 16px;
    height: 16px;
    margin-bottom: 28.6px;
    flex: none;
}
.side-sep {
    width: 16px;
    height: 1px;
    margin-top: -3px;
    background: #dadce0;
}
.side-plus {
    width: 18px;
    height: 18px;
    margin-top: 26.5px;
    fill: #202124;
}
.side-right {
    width: 14px;
    height: 14px;
    margin-top: 615px;
    fill: #202124;
}

/* windows taskbar */
.taskbar {
    height: 40px;
    flex: none;
    display: flex;
    background: linear-gradient(90deg, #1c1c1c, #262626 55%, #363431 80%, #2b2a28);
    color: #fff;
}
.start {
    width: 48px;
    display: flex;
    align-items: center;
    justify-content: center;
}
.task-search {
    position: relative;
    width: 288px;
    margin-right: 2px;
    display: flex;
    align-items: center;
    padding-left: 11px;
    background: #474747;
    border: 1px solid #6d6d6d;
    border-bottom: 0;
}
.task-search-text {
    margin-left: 11px;
    font-size: 14.5px;
    color: #e4e4e4;
}
.ginger {
    position: absolute;
    left: 220px;
    top: 2px;
}
.ornament {
    position: absolute;
    left: 250px;
    top: 4px;
}
.apps {
    display: flex;
}
.app {
    position: relative;
    width: 49px;
    display: flex;
    align-items: center;
    justify-content: center;
}
.app.on::after {
    content: "";
    position: absolute;
    left: 4.5px;
    right: 4.5px;
    bottom: 0;
    height: 2px;
    background: #b5b5b5;
}
.hl {
    background: #333;
}
.chrome {
    width: 24px;
    height: 24px;
}
.ch-badge {
    position: absolute;
    left: 25px;
    top: 18px;
    width: 16px;
    height: 16px;
    border-radius: 50%;
    color: #eee;
    font-size: 8.5px;
    line-height: 16px;
    text-align: center;
}
.ch-badge.tiny {
    left: 27px;
    top: 20px;
    width: 12px;
    height: 12px;
    font-size: 6.5px;
    line-height: 12px;
}
.tg-badge {
    position: absolute;
    left: 25px;
    top: 18px;
    width: 15px;
    height: 15px;
    border-radius: 50%;
    background: #e53935;
    color: #fff;
    font-size: 10px;
    line-height: 15px;
    text-align: center;
}
.zoom-ic {
    width: 24px;
    height: 24px;
    border-radius: 7px;
    background: #0b5cff;
    color: #fff;
    font-size: 20px;
    font-weight: 700;
    line-height: 24px;
    text-align: center;
}
.zoom-ic.mini {
    width: 16px;
    height: 16px;
    border-radius: 50%;
    font-size: 12px;
    line-height: 16px;
}
.tg-mini {
    width: 16px;
    height: 16px;
    border-radius: 50% 50% 3px 3px;
    background: linear-gradient(#2a9bd8 45%, #e53935 45%);
    color: #fff;
    font-size: 8px;
    line-height: 22px;
    text-align: center;
    overflow: hidden;
}
.tray {
    margin-left: auto;
    display: flex;
    align-items: center;
}
.tray-ic {
    width: 24px;
    display: flex;
    align-items: center;
    justify-content: center;
}
.tray-ic:first-child {
    margin-left: 2px;
}
.clock {
    width: 66px;
    font-size: 12px;
    line-height: 18px;
    text-align: center;
    color: #eee;
}
.notif {
    position: relative;
    width: 40px;
    display: flex;
    justify-content: center;
}
.notif-badge {
    position: absolute;
    left: 21px;
    top: 8px;
    width: 14px;
    height: 14px;
    border-radius: 50%;
    border: 1px solid #bbb;
    background: #333;
    font-size: 10px;
    line-height: 12px;
    text-align: center;
}
.show-desktop {
    width: 12px;
    height: 40px;
    border-left: 1px solid #777;
}
```
